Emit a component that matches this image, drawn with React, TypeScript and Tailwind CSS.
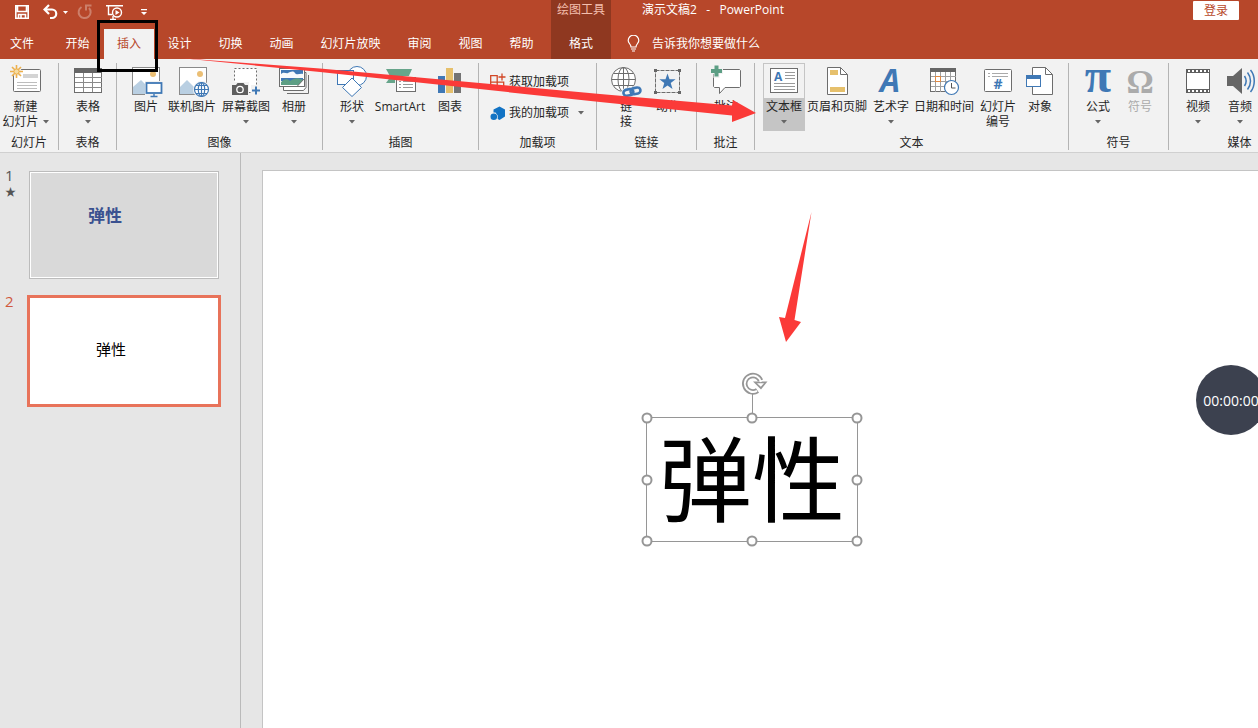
import type { ReactNode } from "react";

const FONT = "font-['Open_Sans','Noto_Sans_CJK_SC',sans-serif]";
const BLUE = "#3f78b5";
const GRAY = "#6d6d6d";
const GOLD = "#e6c06c";

function Icon({ children }: { children: ReactNode }) {
  return (
    <svg width="42" height="36" viewBox="0 0 42 36" fill="none" stroke={GRAY} className="block shrink-0" aria-hidden="true">
      {children}
    </svg>
  );
}

function Caret() {
  return (
    <svg width="6" height="4" viewBox="0 0 6 4" className="inline-block shrink-0" aria-hidden="true">
      <path d="M0 0h6L3 3.500z" fill="#666" />
    </svg>
  );
}

function star(cx: number, cy: number, r: number) {
  return Array.from({ length: 10 }, (_, i) => {
    const a = -Math.PI / 2 + (i * Math.PI) / 5;
    const k = i % 2 ? r * 0.4 : r;
    return `${cx + k * Math.cos(a)},${cy + k * Math.sin(a)}`;
  }).join(" ");
}

const icons = {
  newSlide: (
    <Icon>
      <rect x="8.500" y="6.500" width="27" height="22" rx="1" fill="#fff" />
      <path d="M18 11h15v4H18z" fill="#d4d4d4" stroke="none" />
      <path d="M12 19.500h20M12 22.500h20M12 25.500h20" stroke="#bdbdbd" />
      <circle cx="11.500" cy="8.500" r="5" fill="#f2f2f2" stroke="none" />
      <path d="M11.500 2v13M5 8.500h13M7 4l9 9M16 4l-9 9" stroke="#edb04c" strokeWidth="1.600" />
      <circle cx="11.500" cy="8.500" r="2.600" fill="#f7dca0" stroke="#edb04c" />
    </Icon>
  ),
  table: (
    <Icon>
      <rect x="7.500" y="5.500" width="27" height="24" fill="#fff" />
      <path d="M7 5h28v5H7z" fill="#666" stroke="none" />
      <path d="M16.500 10v19M25.500 10v19M8 14.500h27M8 19.500h27M8 24.500h27" stroke="#8a8a8a" />
    </Icon>
  ),
  picture: (
    <Icon>
      <rect x="7.500" y="4.500" width="27" height="27" fill="#fff" stroke="#8a8a8a" />
      <circle cx="28" cy="11" r="3" fill="#ebbf75" stroke="none" />
      <path d="M8 31v-7l8-7 8 8v6z" fill="#b9cfe2" stroke="none" />
      <path d="M20 18h18v15H20z" fill="#f2f2f2" stroke="none" />
      <rect x="21.500" y="20" width="15" height="10" fill="#fff" stroke={BLUE} strokeWidth="1.800" />
      <path d="M29 31v2M25.500 33.500h7" stroke={BLUE} strokeWidth="1.400" />
    </Icon>
  ),
  online: (
    <Icon>
      <rect x="8.500" y="4.500" width="27" height="27" fill="#fff" stroke="#8a8a8a" />
      <circle cx="29" cy="11" r="3" fill="#ebbf75" stroke="none" />
      <path d="M9 31v-7l7-7 8 8v6z" fill="#b9cfe2" stroke="none" />
      <circle cx="30.500" cy="26.500" r="8.500" fill="#f2f2f2" stroke="none" />
      <g stroke={BLUE} strokeWidth="1.200">
        <circle cx="30.500" cy="26.500" r="7" fill="#fff" />
        <ellipse cx="30.500" cy="26.500" rx="3.200" ry="7" />
        <path d="M23.500 26.500h14M30.500 19.500v14M25 22.500h11M25 30.500h11" />
      </g>
    </Icon>
  ),
  screenshot: (
    <Icon>
      <rect x="9.500" y="5.500" width="22" height="24" fill="#fff" strokeDasharray="2 2" />
      <path d="M6 19h18v13H6zM26 22h11v11H26z" fill="#f2f2f2" stroke="none" />
      <path d="M7 22h4l1.500-2h6l1.500 2h3v10H7z" fill="#5f5f5f" stroke="none" />
      <circle cx="15" cy="26.500" r="3.200" fill="#5f5f5f" stroke="#fff" strokeWidth="1.300" />
      <path d="M31 23.500v8M27 27.500h8" stroke={BLUE} strokeWidth="2" />
    </Icon>
  ),
  album: (
    <Icon>
      <path d="M14 30.500h21.500V12" />
      <path d="M10.500 24v3.500h20l2.500-3V9.500h-3" fill="#fff" />
      <rect x="6.500" y="5.500" width="25" height="18" fill="#fff" />
      <path d="M8 7h22v11H8z" fill="#3f78b5" stroke="none" />
      <path d="M8 11c3-3 5 0 7-1s5-3 7 0 5 0 8 1v4H8z" fill="#f7fafc" stroke="none" />
      <path d="M8 19c3-3 6-4 9-1 4-3 8-4 13-1v5H8z" fill="#5e9f85" stroke="none" />
      <path d="M24 23.500l7.500-8v8z" fill="#fff" />
    </Icon>
  ),
  shapes: (
    <Icon>
      <g stroke={BLUE}>
        <circle cx="26" cy="13" r="9.500" fill="#fff" />
        <rect x="6.500" y="7.500" width="16" height="14" fill="#fff" />
        <path d="M21 15l9.500 9.500L21 33.500 11.500 24.500z" fill="#fff" />
      </g>
    </Icon>
  ),
  smartArt: (
    <Icon>
      <path d="M7 6h26l-4 9H12z" fill="#67a58b" stroke="none" />
      <path d="M12 13h10v7H7z" fill="#67a58b" stroke="none" />
      <path d="M16 13h22v17H16z" fill="#f2f2f2" stroke="none" />
      <rect x="17.500" y="14.500" width="19" height="14" fill="#fff" />
      <path d="M20 18.500h2M24 18.500h10M20 21.500h2M24 21.500h10M20 24.500h2M24 24.500h10" stroke="#999" />
    </Icon>
  ),
  chart: (
    <Icon>
      <g stroke="none">
        <path d="M9 13h7v17H9z" fill={BLUE} />
        <path d="M17 5h7v25h-7z" fill={GOLD} />
        <path d="M25 10h7v20h-7z" fill="#737373" />
      </g>
    </Icon>
  ),
  link: (
    <Icon>
      <circle cx="18.500" cy="16.500" r="12" fill="#fff" />
      <ellipse cx="18.500" cy="16.500" rx="5.500" ry="12" />
      <path d="M6.500 16.500h24M18.500 4.500v24M8.500 10.500h20M8.500 22.500h20" />
      <g strokeWidth="5" stroke="#f2f2f2">
        <rect x="18.500" y="27" width="10" height="6" rx="3" transform="rotate(-12 23 30)" />
        <rect x="25.500" y="25.500" width="10" height="6" rx="3" transform="rotate(-12 30 28)" />
      </g>
      <g stroke={BLUE} strokeWidth="2.600">
        <rect x="18.500" y="26.500" width="10" height="6" rx="3" transform="rotate(-12 23 30)" />
        <rect x="25.500" y="25" width="10" height="6" rx="3" transform="rotate(-12 30 28)" />
      </g>
    </Icon>
  ),
  action: (
    <Icon>
      <rect x="8.500" y="7.500" width="24" height="22" strokeDasharray="4 1" />
      <path d="M7 6h3v3H7zM31 6h3v3h-3zM7 28h3v3H7zM31 28h3v3h-3z" fill="#666" stroke="none" />
      <polygon points={star(20.5, 19, 8.5)} fill={BLUE} stroke="none" />
    </Icon>
  ),
  comment: (
    <Icon>
      <path d="M10 6.500h24.500l1 1v16l-1 1H20l-5.500 6v-6H9.500l-1-1V8z" fill="#fff" />
      <path d="M11.500 1v14M5 8h13" stroke="#f2f2f2" strokeWidth="6" />
      <path d="M11.500 2.500v11M6 8h11" stroke="#5c9e84" strokeWidth="4" />
    </Icon>
  ),
  textBox: (
    <Icon>
      <rect x="7.500" y="5.500" width="27" height="24" fill="#fff" />
      <text x="11" y="18" fontSize="12" fontWeight="700" fill={BLUE} stroke="none" fontFamily="Open Sans">A</text>
      <path d="M22 9.500h10M22 12.500h10M22 15.500h10M11 20.500h21M11 23.500h21M11 26.500h21" stroke="#9a9a9a" />
    </Icon>
  ),
  headerFooter: (
    <Icon>
      <path d="M11.500 4.500h13l7 7v20h-20z" fill="#fff" />
      <path d="M24.500 4.500v7h7" />
      <path d="M14 7h8v5h-8zM14 24h15v5H14z" fill={GOLD} stroke="none" />
    </Icon>
  ),
  wordArt: (
    <Icon>
      <text x="20" y="29" textAnchor="middle" fontSize="32" fontWeight="700" fontStyle="italic" fill={BLUE} stroke="none" fontFamily="Open Sans">A</text>
    </Icon>
  ),
  date: (
    <Icon>
      <rect x="7.500" y="5.500" width="25" height="23" fill="#fff" />
      <path d="M12.500 9v20M17.500 9v20M22.500 9v20M27.500 9v20M8 13.500h25M8 18.500h25M8 23.500h25" stroke="#a0a0a0" />
      <path d="M7 5h26v4H7z" fill="#666" stroke="none" />
      <rect x="12.500" y="13.500" width="5" height="5" stroke="#e08a45" />
      <circle cx="28.500" cy="24.500" r="7" fill="#fff" stroke={BLUE} strokeWidth="1.200" />
      <path d="M28.500 20v5h4" stroke="#555" />
    </Icon>
  ),
  number: (
    <Icon>
      <rect x="7.500" y="6.500" width="27" height="22" rx="1" fill="#fff" />
      <path d="M11 10.500h2M15 10.500h16M11 13.500h2M15 13.500h16" stroke="#aaa" />
      <text x="21" y="26" textAnchor="middle" fontSize="14" fontWeight="700" fill={BLUE} stroke="none" fontFamily="Open Sans">#</text>
    </Icon>
  ),
  object: (
    <Icon>
      <path d="M13.500 4.500h13l7 7v20h-20z" fill="#fff" />
      <path d="M26.500 4.500v7h7" />
      <rect x="7.500" y="12.500" width="14" height="11" fill="#fff" stroke={BLUE} />
      <path d="M7 12h15v4H7z" fill={BLUE} stroke="none" />
    </Icon>
  ),
  equation: (
    <Icon>
      <text x="21" y="29" textAnchor="middle" fontSize="48" fontWeight="700" fill={BLUE} stroke="none" fontFamily="Liberation Serif">π</text>
    </Icon>
  ),
  symbol: (
    <Icon>
      <text x="21" y="30" textAnchor="middle" fontSize="34" fontWeight="700" fill="#ababab" stroke="none" fontFamily="Liberation Serif">Ω</text>
    </Icon>
  ),
  video: (
    <Icon>
      <path d="M9 6h24v24H9z" fill="#5f5f5f" stroke="none" />
      <path d="M10 10h22v16H10z" fill="#fff" stroke="none" />
      <path d="M11 8h21M11 28h21" stroke="#fff" strokeWidth="2" strokeDasharray="2 2" />
    </Icon>
  ),
  audio: (
    <Icon>
      <path d="M8 13h6l9-8v26l-9-8H8z" fill="#666" stroke="none" />
      <g stroke={BLUE} strokeWidth="1.500">
        <path d="M25.500 13c2 3 2 7 0 10M28.500 9.500c4 5 4 12 0 17M31.500 7c5 6 5 16 0 22" />
      </g>
    </Icon>
  ),
};

type ToolProps = {
  icon: ReactNode;
  lines: string[];
  width: string;
  menu?: boolean;
  inlineMenu?: boolean;
  active?: boolean;
  disabled?: boolean;
};

function Tool({ icon, lines, width, menu, inlineMenu, active, disabled }: ToolProps) {
  return (
    <button
      type="button"
      disabled={disabled}
      className={`flex h-[68px] shrink-0 flex-col items-center ${width} ${active ? "bg-[#c5c5c5]" : ""} ${disabled ? "text-[#ababab]" : ""}`}
    >
      <span className={active ? "bg-[#f2f2f2] outline -outline-offset-1 outline-[#c5c5c5]" : ""}>{icon}</span>
      {lines.map((line, i) => (
        <span key={line} className="flex items-center gap-1 leading-[15px] whitespace-nowrap">
          {line}
          {inlineMenu && i === lines.length - 1 && <Caret />}
        </span>
      ))}
      {menu && (
        <span className="flex h-[15px] items-center">
          <Caret />
        </span>
      )}
    </button>
  );
}

function Group({ label, width, pad = "pl-2", children }: { label: string; width: string; pad?: string; children: ReactNode }) {
  return (
    <section aria-label={label} className={`flex shrink-0 flex-col gap-[5px] border-r border-[#b4b4b4] ${width}`}>
      <div className={`flex h-[68px] ${pad}`}>{children}</div>
      <div className="text-center leading-[14px]">{label}</div>
    </section>
  );
}

function Tab({ label, width = "w-[51px]", active }: { label: string; width?: string; active?: boolean }) {
  return (
    <button
      type="button"
      role="tab"
      aria-selected={!!active}
      className={`h-full shrink-0 whitespace-nowrap ${width} ${active ? "bg-[#f2f2f2] text-[#b7472a]" : "text-white"}`}
    >
      {label}
    </button>
  );
}

function QuickAccess() {
  return (
    <div className="flex h-7 items-start gap-[13px] pt-1 pl-[14px] text-white">
      <button type="button" aria-label="保存">
        <svg width="16" height="16" viewBox="0 0 16 16" fill="none" stroke="currentColor" strokeWidth="1.600">
          <path d="M1.800 1.800h12.400v12.400H1.800zM3.500 2v5.500h9V2M4.500 14v-3.500h7V14M7 11v3" />
        </svg>
      </button>
      <button type="button" aria-label="撤消" className="flex items-center gap-1">
        <svg width="16" height="16" viewBox="0 0 16 16" fill="none" stroke="currentColor" strokeWidth="2.200">
          <path d="M6 1L1.500 5.500 6 10M2 5.500h7a4 4 0 0 1 0 8.500H7" />
        </svg>
        <svg width="5" height="3" viewBox="0 0 5 3"><path d="M0 0h5L2.500 3z" fill="currentColor" /></svg>
      </button>
      <button type="button" aria-label="重复" className="-ml-1 opacity-30">
        <svg width="16" height="16" viewBox="0 0 16 16" fill="none" stroke="currentColor" strokeWidth="2">
          <path d="M4.500 3A6 6 0 1 0 12 4M9 6.500V1.500h5.500" />
        </svg>
      </button>
      <button type="button" aria-label="从头开始放映">
        <svg width="18" height="17" viewBox="0 0 18 17" fill="none" stroke="currentColor" strokeWidth="1.400">
          <path d="M0 1.700h17M2.500 2v8.500h4M4 15.500h6M7 15v-3" />
          <circle cx="11" cy="8.500" r="4.500" />
          <path d="M9.500 6v5l4-2.500z" fill="currentColor" stroke="none" />
        </svg>
      </button>
      <button type="button" aria-label="自定义快速访问工具栏" className="pt-[5px] pl-1">
        <svg width="6" height="7" viewBox="0 0 6 7"><path d="M0 0h6v1.300H0zM0 3h6L3 6z" fill="currentColor" /></svg>
      </button>
    </div>
  );
}

function Header() {
  return (
    <header className="flex h-[59px] shrink-0 bg-[#b7472a] text-white">
      <div className="w-[551px] shrink-0">
        <QuickAccess />
        <nav role="tablist" className="flex h-[31px]">
          <Tab label="文件" width="w-11" />
          <div className="w-2" />
          <Tab label="开始" />
          <div className="h-full w-[51px] shrink-0 pt-px pl-px">
            <Tab label="插入" width="w-full" active />
          </div>
          <Tab label="设计" />
          <Tab label="切换" />
          <Tab label="动画" />
          <Tab label="幻灯片放映" width="w-[87px]" />
          <Tab label="审阅" />
          <Tab label="视图" />
          <Tab label="帮助" />
        </nav>
      </div>
      <div className="w-[60px] shrink-0 bg-[#8f3820] text-center">
        <div className="h-7 leading-5 text-[#f3bfae]">绘图工具</div>
        <div className="h-[31px]">
          <Tab label="格式" width="w-full" />
        </div>
      </div>
      <div className="min-w-0 flex-1">
        <div className="flex h-7 items-start justify-between pr-[19px] pl-[31px]">
          <div className="leading-5 whitespace-pre">演示文稿2   -   PowerPoint</div>
          <button type="button" className="mt-px h-[19px] w-[46px] rounded-[1px] bg-white leading-[19px] text-[#b7472a]">登录</button>
        </div>
        <button type="button" className="flex h-[31px] items-center gap-3 pl-4">
          <svg width="13" height="17" viewBox="0 0 13 17" fill="none" stroke="currentColor" strokeWidth="1.200" aria-hidden="true">
            <path d="M4 12c0-3-2.800-3.500-2.800-6.500a5.300 5.300 0 0 1 10.600 0C11.800 8.500 9 9 9 12zM4 14h5M5 16h3" />
          </svg>
          告诉我你想要做什么
        </button>
      </div>
    </header>
  );
}

function Ribbon() {
  return (
    <div className="flex shrink-0 overflow-hidden border-b border-[#d0d0d0] bg-[#f2f2f2] pt-1 pb-0.5 text-[#262626]">
      <Group label="幻灯片" width="w-[59px]" pad="pr-2">
        <Tool icon={icons.newSlide} lines={["新建", "幻灯片"]} width="w-[51px]" inlineMenu />
      </Group>
      <Group label="表格" width="w-[58px]">
        <Tool icon={icons.table} lines={["表格"]} width="w-[42px]" menu />
      </Group>
      <Group label="图像" width="w-[206px]" pad="pl-[10px]">
        <Tool icon={icons.picture} lines={["图片"]} width="w-[38px]" />
        <Tool icon={icons.online} lines={["联机图片"]} width="w-[54px]" />
        <Tool icon={icons.screenshot} lines={["屏幕截图"]} width="w-[54px]" menu />
        <Tool icon={icons.album} lines={["相册"]} width="w-[42px]" menu />
      </Group>
      <Group label="插图" width="w-[156px]">
        <Tool icon={icons.shapes} lines={["形状"]} width="w-[42px]" menu />
        <Tool icon={icons.smartArt} lines={["SmartArt"]} width="w-[54px]" />
        <Tool icon={icons.chart} lines={["图表"]} width="w-[46px]" />
      </Group>
      <Group label="加载项" width="w-[118px]" pad="pl-[11px]">
        <div className="flex flex-col items-start gap-[11px] pt-[9px]">
          <button type="button" className="flex h-5 items-center gap-[3px]">
            <svg width="16" height="18" viewBox="0 0 16 18" fill="none" stroke="#d24726" strokeWidth="1.300" aria-hidden="true">
              <path d="M.7 2.700h6.500v6.500H.7zM.7 9.200h6.500v6.500H.7zM7.200 9.200h6.500v6.500H7.200zM12 .5v7M8.500 4h7" />
            </svg>
            获取加载项
          </button>
          <button type="button" className="flex h-5 items-center gap-[3px] whitespace-nowrap">
            <svg width="16" height="15" viewBox="0 0 16 15" fill="#1273c4" aria-hidden="true">
              <path d="M3.500 3.500L9.500.5l5.500 3v7l-5.500 3.500-1.800-1V9.500L5.500 6.500H3.500z" />
              <circle cx="3.800" cy="10.800" r="3.300" />
            </svg>
            我的加载项
            <span className="flex pl-1.5"><Caret /></span>
          </button>
        </div>
      </Group>
      <Group label="链接" width="w-[100px]">
        <Tool icon={icons.link} lines={["链", "接"]} width="w-[42px]" />
        <Tool icon={icons.action} lines={["动作"]} width="w-[42px]" />
      </Group>
      <Group label="批注" width="w-[58px]">
        <Tool icon={icons.comment} lines={["批注"]} width="w-[42px]" />
      </Group>
      <Group label="文本" width="w-[314px]">
        <Tool icon={icons.textBox} lines={["文本框"]} width="w-[42px]" menu active />
        <Tool icon={icons.headerFooter} lines={["页眉和页脚"]} width="w-[64px]" />
        <Tool icon={icons.wordArt} lines={["艺术字"]} width="w-[44px]" menu />
        <Tool icon={icons.date} lines={["日期和时间"]} width="w-[62px]" />
        <Tool icon={icons.number} lines={["幻灯片", "编号"]} width="w-[46px]" />
        <Tool icon={icons.object} lines={["对象"]} width="w-[38px]" />
      </Group>
      <Group label="符号" width="w-[100px]">
        <Tool icon={icons.equation} lines={["公式"]} width="w-[42px]" menu />
        <Tool icon={icons.symbol} lines={["符号"]} width="w-[42px]" disabled />
      </Group>
      <Group label="媒体" width="w-[142px]">
        <Tool icon={icons.video} lines={["视频"]} width="w-[42px]" menu />
        <Tool icon={icons.audio} lines={["音频"]} width="w-[42px]" menu />
      </Group>
    </div>
  );
}

function Thumbnails() {
  return (
    <aside className="flex w-[241px] shrink-0 flex-col gap-4 border-r border-[#bababa] pt-[18px]">
      <div className="flex">
        <div className="flex w-[29px] flex-col pl-[5px] text-[#555]">
          <span className="-mt-1 text-[15px] leading-4">1</span>
          <span className="text-[11px] leading-[18px]">★</span>
        </div>
        <button type="button" className="h-[108px] w-[190px] border border-[#bcbcbc] bg-white p-px">
          <span className="flex h-full items-start bg-[#d9d9d9] pt-[31px] pl-[57px] text-[17px] leading-6 font-bold text-[#3a5190]">弹性</span>
        </button>
      </div>
      <div className="flex">
        <div className="w-[27px] pl-[5px] text-[15px] leading-3 text-[#d0583d]">2</div>
        <button type="button" className="flex h-[112px] w-[194px] items-start border-[3px] border-[#e8735a] bg-white pt-[41px] pl-[66px] text-[15px] leading-5 text-black">弹性</button>
      </div>
    </aside>
  );
}

const handles = [
  "left-0 top-0",
  "left-1/2 top-0",
  "left-full top-0",
  "left-0 top-1/2",
  "left-full top-1/2",
  "left-0 top-full",
  "left-1/2 top-full",
  "left-full top-full",
];

function Canvas() {
  return (
    <main className="flex min-w-0 flex-1 pt-[17px] pl-[21px]">
      <div className="relative flex-1 border-t border-l border-[#c4c4c4] bg-white">
        <div className="absolute top-[246px] left-[383px] h-[125px] w-[212px] border border-[#969696] pl-3 text-[93px] leading-[122px] whitespace-nowrap text-black">
          弹性
          <div className="absolute -top-6 left-1/2 h-6 w-px bg-[#969696]" />
          <svg className="absolute -top-[46px] left-[94px]" width="28" height="24" viewBox="0 0 28 24" fill="none" aria-hidden="true">
            <path d="M19.500 8.500A8.200 8.200 0 1 0 16.500 18.500" stroke="#969696" strokeWidth="5.500" />
            <path d="M12 9.500h14.500l-6.500 8z" fill="#969696" />
            <path d="M20 10A8.200 8.200 0 1 0 16 18.800" stroke="#fff" strokeWidth="2" />
            <path d="M16 11.200h7l-3.200 3.600z" fill="#fff" />
          </svg>
          {handles.map((place) => (
            <span key={place} className={`absolute size-[11px] -translate-x-1/2 -translate-y-1/2 rounded-full border-2 border-[#969696] bg-white ${place}`} />
          ))}
        </div>
      </div>
    </main>
  );
}

export default function App() {
  return (
    <div className={`relative flex h-screen flex-col overflow-hidden bg-[#e6e6e6] text-[12px] ${FONT}`}>
      <Header />
      <Ribbon />
      <div className="flex min-h-0 flex-1">
        <Thumbnails />
        <Canvas />
      </div>
      <div className="absolute top-5 left-[97px] h-[52px] w-[61px] border-[3px] border-black" />
      <svg className="pointer-events-none absolute top-0 left-0 h-full w-full" fill="#fb3a38" aria-hidden="true">
        <path d="M180 58L320 68.500 600 94 732 105.500 733 100 756 113 732 122 732 115.500 600 102 320 72z" />
        <path d="M811.500 212L794.500 320 801 322 786 342 779 317 785 318z" />
      </svg>
      <div className="absolute top-[365px] -right-2 flex size-[70px] items-center justify-center rounded-full bg-[#3c414f] text-[14px] text-white">00:00:00</div>
    </div>
  );
}
